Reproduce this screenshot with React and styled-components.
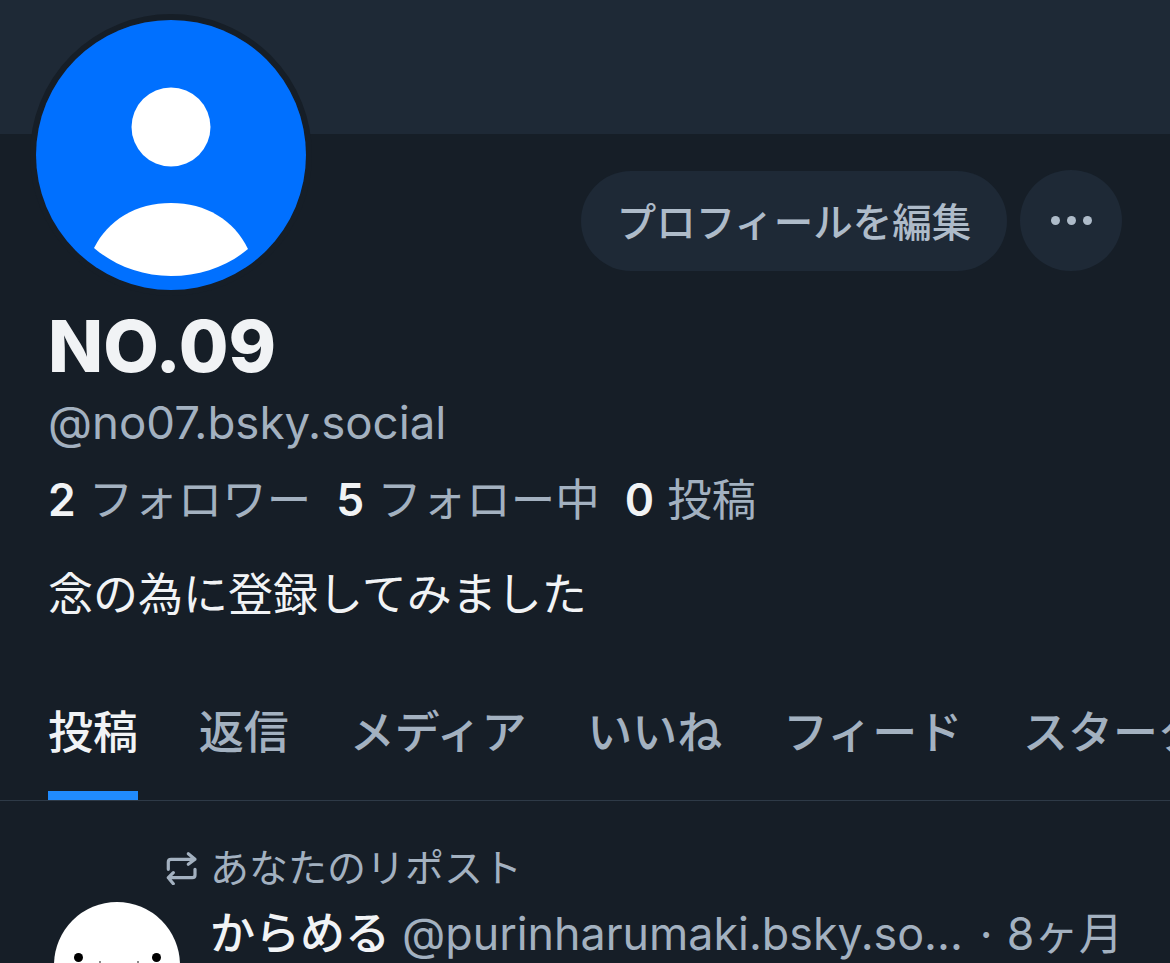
import styled, { createGlobalStyle } from "styled-components";

const GlobalStyle = createGlobalStyle`
  html, body {
    margin: 0;
    padding: 0;
    background: #161e27;
    overflow: hidden;
  }
  body {
    font-family: Inter, "Noto Sans CJK JP", sans-serif;
  }
`;

const Page = styled.div`
  width: 1170px;
  height: 963px;
  overflow: hidden;
  position: relative;
  background: #161e27;
`;

const Banner = styled.div`
  height: 134px;
  background: #1e2936;
`;

const Avatar = styled.div`
  position: absolute;
  left: 30px;
  top: 14px;
  width: 270px;
  height: 270px;
  border: 6px solid #161e27;
  border-radius: 50%;
  overflow: hidden;
`;

const Actions = styled.div`
  display: flex;
  justify-content: flex-end;
  align-items: center;
  gap: 13px;
  height: 101px;
  margin-top: 36px;
  padding-right: 48px;
`;

const EditButton = styled.div`
  height: 100px;
  width: 426px;
  border-radius: 50px;
  background: #1e2936;
  color: #aebbc9;
  font-size: 39.5px;
  font-weight: 500;
  display: flex;
  align-items: center;
  justify-content: center;
  padding-bottom: 2px;
  box-sizing: border-box;
`;

const MoreButton = styled.div`
  width: 102px;
  height: 101px;
  border-radius: 50%;
  background: #1e2936;
  display: flex;
  align-items: center;
  justify-content: center;
  gap: 7px;
`;

const Dot = styled.span`
  width: 9px;
  height: 9px;
  border-radius: 50%;
  background: #aebbc9;
`;

const Info = styled.div`
  padding: 0 48px;
`;

const Name = styled.div`
  margin-top: 34px;
  font-size: 72px;
  line-height: 82px;
  font-weight: 800;
  color: #f1f3f5;
`;

const Handle = styled.div`
  margin-top: 11px;
  font-size: 45.6px;
  line-height: 50px;
  color: #a3b1c0;
`;

const Stats = styled.div`
  display: flex;
  gap: 25px;
  margin-top: 26px;
  font-size: 44.5px;
  line-height: 52px;
  color: #a3b1c0;
`;

const Stat = styled.div`
  white-space: nowrap;
  b {
    color: #f1f3f5;
    font-weight: 600;
    margin-right: 13px;
  }
`;

const Bio = styled.div`
  margin-top: 43px;
  font-size: 45px;
  line-height: 52px;
  color: #f1f3f5;
`;

const Tabs = styled.div`
  display: flex;
  gap: 60.8px;
  margin-top: 85px;
  height: 94px;
  padding-left: 48px;
  border-bottom: 1px solid #2e3a47;
  white-space: nowrap;
`;

const Tab = styled.div`
  position: relative;
  font-size: 45px;
  line-height: 54px;
  font-weight: 500;
  color: ${(p) => (p.$active ? "#f1f3f5" : "#a3b1c0")};
  &::after {
    content: "";
    display: ${(p) => (p.$active ? "block" : "none")};
    position: absolute;
    left: 0;
    right: 0;
    bottom: 0;
    height: 9px;
    background: #208bfe;
  }
`;

const Feed = styled.div`
  padding: 44px 52px 0 54px;
`;

const Repost = styled.div`
  display: flex;
  align-items: center;
  gap: 11px;
  padding-left: 111px;
  font-size: 39px;
  line-height: 46px;
  color: #a3b1c0;
  svg {
    width: 34px;
    height: 34px;
    flex: none;
  }
`;

const Post = styled.div`
  display: flex;
  gap: 30px;
  margin-top: 7px;
`;

const PostAvatar = styled.div`
  flex: none;
  width: 126px;
  height: 126px;
  margin-top: 4px;
  border-radius: 50%;
  background: #fff;
  position: relative;
`;

const Eye = styled.span`
  position: absolute;
  top: 51px;
  left: ${(p) => p.$left}px;
  width: 9px;
  height: 9px;
  border-radius: 50%;
  background: #000;
`;

const Mouth = styled.span`
  position: absolute;
  top: 59px;
  left: ${(p) => p.$left}px;
  width: 2px;
  height: 2px;
  background: #8a8a8a;
`;

const Author = styled.div`
  display: flex;
  align-items: baseline;
  white-space: nowrap;
`;

const AuthorName = styled.span`
  font-size: 45px;
  line-height: 56px;
  font-weight: 500;
  color: #f1f3f5;
`;

const AuthorHandle = styled.span`
  margin-left: 12px;
  font-size: 44.8px;
  color: #a3b1c0;
`;

const Age = styled.span`
  margin-left: ${(p) => p.$gap}px;
  font-size: 44.5px;
  color: #a3b1c0;
`;

export default function App() {
  return (
    <Page>
      <GlobalStyle />
      <Banner />
      <Avatar>
        <svg width="270" height="270" viewBox="0 0 270 270">
          <rect width="270" height="270" fill="#0070ff" />
          <circle cx="135" cy="107" r="39.500" fill="#fff" />
          <path d="M58 228C72 200 100 183 135 183C170 183 198 200 212 229C192 246 165 256 135 256C105 256 78 245 58 228Z" fill="#fff" />
        </svg>
      </Avatar>
      <Actions>
        <EditButton>プロフィールを編集</EditButton>
        <MoreButton>
          <Dot />
          <Dot />
          <Dot />
        </MoreButton>
      </Actions>
      <Info>
        <Name>NO.09</Name>
        <Handle>@no07.bsky.social</Handle>
        <Stats>
          <Stat><b>2</b>フォロワー</Stat>
          <Stat><b>5</b>フォロー中</Stat>
          <Stat><b>0</b>投稿</Stat>
        </Stats>
        <Bio>念の為に登録してみました</Bio>
      </Info>
      <Tabs>
        <Tab $active>投稿</Tab>
        <Tab>返信</Tab>
        <Tab>メディア</Tab>
        <Tab>いいね</Tab>
        <Tab>フィード</Tab>
        <Tab>スターターパック</Tab>
      </Tabs>
      <Feed>
        <Repost>
          <svg viewBox="0 0 34 34" fill="none" stroke="#a3b1c0" strokeWidth="3.2" strokeLinecap="round" strokeLinejoin="round">
            <path d="M3.300 18.300V11C3.300 9.200 4.500 8.300 6 8.300H30M23.300 2.700L30 8.300L23.300 13.300" />
            <path d="M30 18.300V24C30 25.800 28.800 26.700 27.300 26.700H3.300M8.300 21.700L3.300 26.700L8.300 32.700" />
          </svg>
          あなたのリポスト
        </Repost>
        <Post>
          <PostAvatar>
            <Eye $left={20} />
            <Eye $left={98} />
            <Mouth $left={45} />
            <Mouth $left={83} />
          </PostAvatar>
          <Author>
            <AuthorName>からめる</AuthorName>
            <AuthorHandle>@purinharumaki.bsky.so...</AuthorHandle>
            <Age $gap={17}>·</Age>
            <Age $gap={14}>8ヶ月</Age>
          </Author>
        </Post>
      </Feed>
    </Page>
  );
}
